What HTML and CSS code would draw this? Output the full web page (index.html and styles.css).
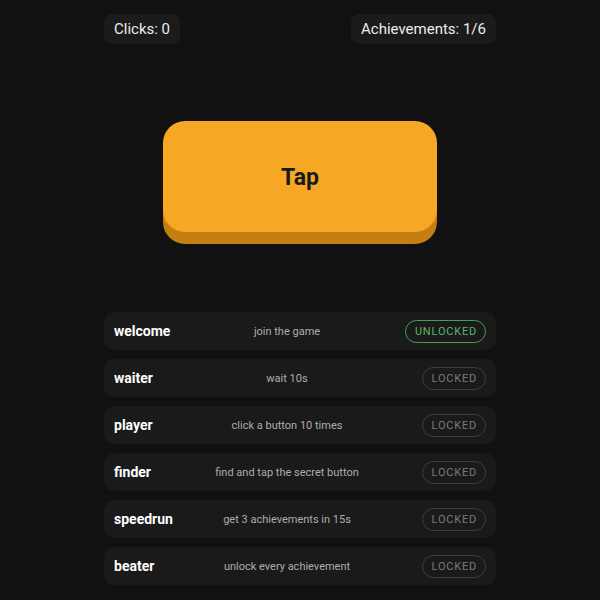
FILE: index.html
```html
<!DOCTYPE html>
<html>
<head>
<meta charset="utf-8">
<link rel="stylesheet" href="styles.css">
</head>
<body>
<div class="app">
  <div class="header">
    <div class="pill">Clicks: 0</div>
    <div class="pill">Achievements: 1/6</div>
  </div>
  <div class="stage">
    <button class="tap">Tap</button>
  </div>
  <div class="list">
    <div class="row"><span class="name">welcome</span><span class="desc">join the game</span><span class="badge on">UNLOCKED</span></div>
    <div class="row"><span class="name">waiter</span><span class="desc">wait 10s</span><span class="badge">LOCKED</span></div>
    <div class="row"><span class="name">player</span><span class="desc">click a button 10 times</span><span class="badge">LOCKED</span></div>
    <div class="row"><span class="name">finder</span><span class="desc">find and tap the secret button</span><span class="badge">LOCKED</span></div>
    <div class="row"><span class="name">speedrun</span><span class="desc">get 3 achievements in 15s</span><span class="badge">LOCKED</span></div>
    <div class="row"><span class="name">beater</span><span class="desc">unlock every achievement</span><span class="badge">LOCKED</span></div>
  </div>
</div>
</body>
</html>
```
FILE: styles.css
```css
html, body {
  margin: 0;
  padding: 0;
  background: #111111;
  font-family: Roboto, "Liberation Sans", sans-serif;
}
.app {
  width: 392px;
  margin: 0 auto;
  padding-top: 14px;
}
.header {
  display: flex;
  justify-content: space-between;
}
.pill {
  background: #1b1b1b;
  color: #ececec;
  font-size: 15px;
  line-height: 18px;
  padding: 6px 10px;
  border-radius: 8px;
}
.stage {
  display: flex;
  justify-content: center;
  padding-top: 77px;
  padding-bottom: 68px;
}
.tap {
  width: 274px;
  height: 111px;
  border: none;
  border-radius: 22px;
  background: #f6a825;
  box-shadow: 0 12px 0 #c47f12;
  color: #1a1a1a;
  font-family: Roboto, "Liberation Sans", sans-serif;
  font-weight: 700;
  font-size: 23px;
  margin-bottom: 12px;
  padding: 2px 0 0 0;
}
.list {
  display: flex;
  flex-direction: column;
  gap: 9px;
}
.row {
  display: grid;
  grid-template-columns: 90px 1fr 116px;
  align-items: center;
  height: 38px;
  padding: 0 10px;
  background: #1a1a1a;
  border-radius: 10px;
}
.name {
  color: #ffffff;
  font-weight: 700;
  font-size: 14px;
}
.desc {
  color: #adadad;
  font-size: 11px;
  text-align: center;
}
.badge {
  justify-self: end;
  font-size: 11px;
  line-height: 15px;
  letter-spacing: 0.8px;
  padding: 3px 8px 3px 9px;
  border: 1px solid #3e3e3e;
  border-radius: 12px;
  color: #7a7a7a;
}
.badge.on {
  border-color: #3fa354;
  color: #55b868;
}
```
